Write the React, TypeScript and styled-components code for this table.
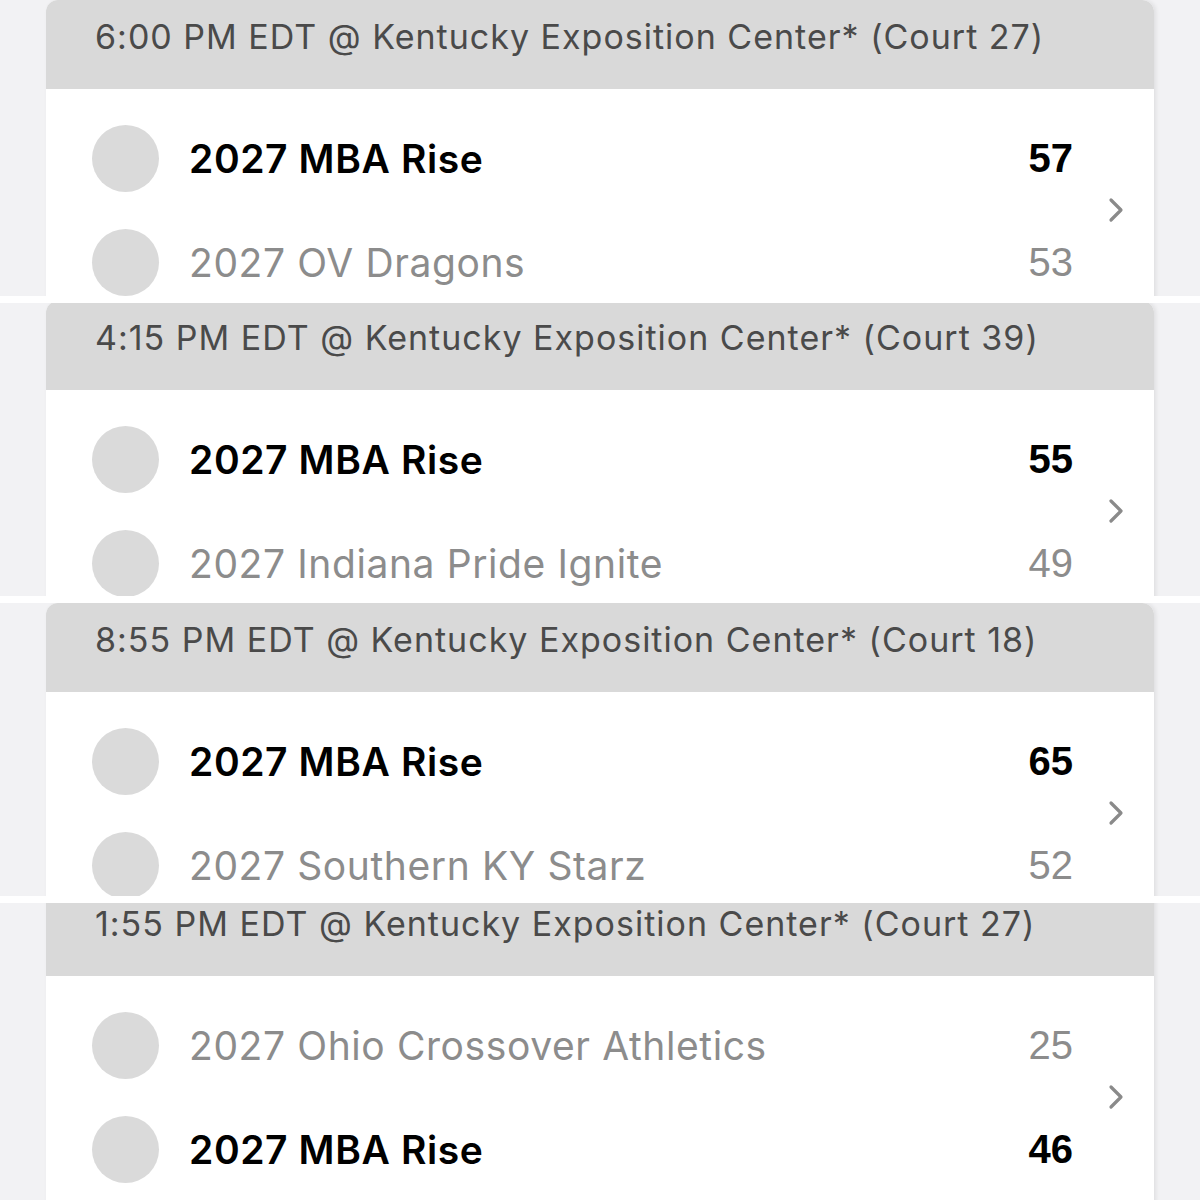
import React from "react";
import styled, { createGlobalStyle } from "styled-components";

const GlobalStyle = createGlobalStyle`
  html, body {
    margin: 0;
    padding: 0;
    background: #ffffff;
  }
  * { box-sizing: border-box; }
`;

type Team = { name: string; score: number; winner: boolean };
type Game = { header: string; offset: number; height: number; teams: Team[] };

const games: Game[] = [
  {
    header: "6:00 PM EDT @ Kentucky Exposition Center* (Court 27)",
    offset: 0,
    height: 296,
    teams: [
      { name: "2027 MBA Rise", score: 57, winner: true },
      { name: "2027 OV Dragons", score: 53, winner: false },
    ],
  },
  {
    header: "4:15 PM EDT @ Kentucky Exposition Center* (Court 39)",
    offset: -2,
    height: 293,
    teams: [
      { name: "2027 MBA Rise", score: 55, winner: true },
      { name: "2027 Indiana Pride Ignite", score: 49, winner: false },
    ],
  },
  {
    header: "8:55 PM EDT @ Kentucky Exposition Center* (Court 18)",
    offset: 0,
    height: 293,
    teams: [
      { name: "2027 MBA Rise", score: 65, winner: true },
      { name: "2027 Southern KY Starz", score: 52, winner: false },
    ],
  },
  {
    header: "1:55 PM EDT @ Kentucky Exposition Center* (Court 27)",
    offset: -16,
    height: 297,
    teams: [
      { name: "2027 Ohio Crossover Athletics", score: 25, winner: false },
      { name: "2027 MBA Rise", score: 46, winner: true },
    ],
  },
];

const gaps = [7, 7, 7];

const Page = styled.div`
  display: flex;
  flex-direction: column;
  width: 1200px;
  height: 1200px;
  overflow: hidden;
  background: #ffffff;
`;

const Strip = styled.div<{ $height: number }>`
  height: ${(p) => p.$height}px;
  flex: none;
  overflow: hidden;
  background: #f2f2f4;
  padding: 0 46px;
`;

const Gap = styled.div<{ $height: number }>`
  height: ${(p) => p.$height}px;
  flex: none;
  background: #ffffff;
`;

const Card = styled.div<{ $offset: number }>`
  margin-top: ${(p) => p.$offset}px;
  background: #ffffff;
  border-radius: 12px 12px 0 0;
  box-shadow: 2px 0 4px rgba(0, 0, 0, 0.08);
  overflow: hidden;
  height: 420px;
`;

const Header = styled.div`
  height: 89px;
  background: #d9d9d9;
  padding: 15px 0 0 49px;
  font-family: Inter, "Open Sans", sans-serif;
  font-size: 34px;
  line-height: 44px;
  letter-spacing: 1px;
  color: #4a4a4a;
  white-space: nowrap;
`;

const Body = styled.div`
  display: flex;
  align-items: stretch;
  padding-top: 17px;
`;

const Teams = styled.div`
  flex: 1;
  display: flex;
  flex-direction: column;
  padding-left: 46px;
`;

const Row = styled.div`
  height: 104px;
  display: flex;
  align-items: center;
`;

const Avatar = styled.div`
  width: 67px;
  height: 67px;
  border-radius: 50%;
  background: #dadada;
  flex: none;
`;

const Name = styled.div<{ $winner: boolean }>`
  flex: 1;
  margin-left: 30px;
  font-family: Inter, "Open Sans", sans-serif;
  font-size: 39px;
  letter-spacing: 0.6px;
  font-weight: ${(p) => (p.$winner ? 600 : 400)};
  color: ${(p) => (p.$winner ? "#000000" : "#8c8c8c")};
  white-space: nowrap;
`;

const Score = styled.div<{ $winner: boolean }>`
  font-family: "Liberation Sans", Arial, sans-serif;
  font-size: 40px;
  font-weight: ${(p) => (p.$winner ? 700 : 400)};
  color: ${(p) => (p.$winner ? "#000000" : "#8c8c8c")};
`;

const ChevronCol = styled.div`
  width: 81px;
  height: 208px;
  display: flex;
  align-items: center;
  justify-content: center;
  padding-left: 5px;
  color: #8a8a8a;
`;

const Chevron = () => (
  <svg width="16" height="26" viewBox="0 0 16 26" fill="none">
    <path d="M3 3 L13 13 L3 23" stroke="currentColor" strokeWidth="3.2" strokeLinecap="round" strokeLinejoin="round" />
  </svg>
);

export default function App() {
  return (
    <>
      <GlobalStyle />
      <Page>
        {games.map((g, i) => (
          <React.Fragment key={i}>
            <Strip $height={g.height}>
              <Card $offset={g.offset}>
                <Header>{g.header}</Header>
                <Body>
                  <Teams>
                    {g.teams.map((t, j) => (
                      <Row key={j}>
                        <Avatar />
                        <Name $winner={t.winner}>{t.name}</Name>
                        <Score $winner={t.winner}>{t.score}</Score>
                      </Row>
                    ))}
                  </Teams>
                  <ChevronCol>
                    <Chevron />
                  </ChevronCol>
                </Body>
              </Card>
            </Strip>
            {i < gaps.length && <Gap $height={gaps[i]} />}
          </React.Fragment>
        ))}
      </Page>
    </>
  );
}
